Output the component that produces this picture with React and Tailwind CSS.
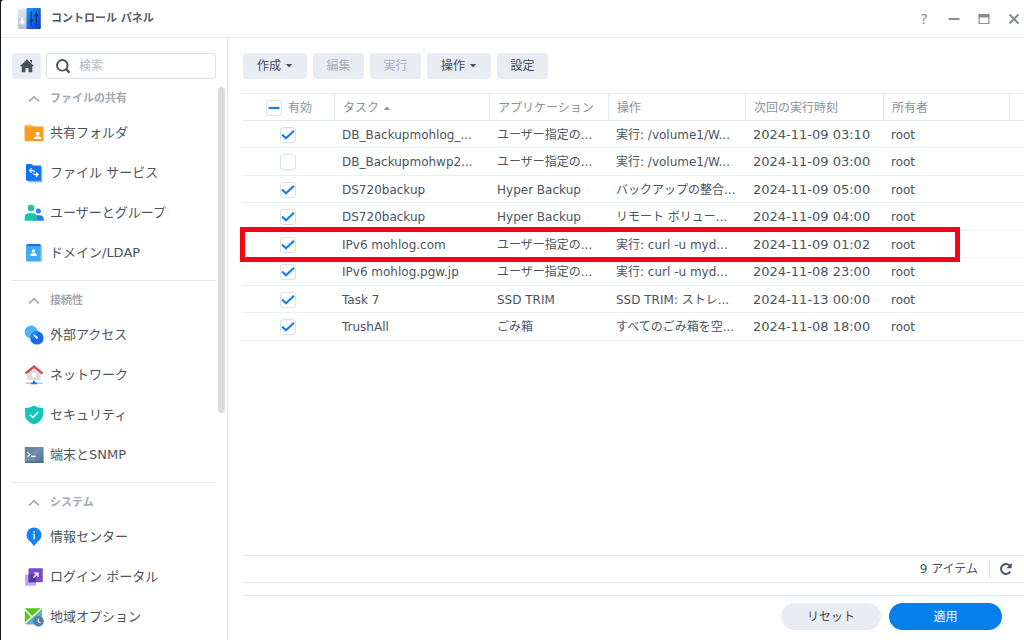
import React, { useState } from "react";

const SharedFolderIcon = () => (
  <svg viewBox="0 0 20 20" className="size-5">
    <path d="M.6 2.500Q.6 1.500 1.600 1.500H7l1.500 1.600H11V6H.6z" fill="#ffc97a" />
    <path d="M.6 3.600h18q.8 0 .8.8v13q0 .8-.8.8H1.400q-.8 0-.8-.8z" fill="#fb9d1e" />
    <circle cx="13.700" cy="10.800" r="2" fill="#fff" />
    <path d="M10 16q0-2.800 3.700-2.800T17.400 16z" fill="#fff" />
  </svg>
);

const FileServiceIcon = () => (
  <svg viewBox="0 0 20 20" className="size-5">
    <path d="M4 3.500h14.200v15.800H4z" fill="#7fb8ff" />
    <path d="M2 2q0-1 1-1h4.500L9 2.500h8V17.800H3q-1 0-1-1z" fill="#0f73f5" />
    <path
      d="M7.700 5.400 5.500 7.600l2.200 2.200M5.500 7.600h3.300q1.500 0 1.700 1.600M12 9.400l2.200 2.200-2.200 2.200M14.200 11.600h-3.300q-1.500 0-1.700-1.500"
      fill="none"
      stroke="#fff"
      strokeWidth="1.200"
    />
  </svg>
);

const UsersIcon = () => (
  <svg viewBox="0 0 20 20" className="size-5">
    <circle cx="14.400" cy="8" r="2.500" fill="#2f7de8" />
    <path d="M9 17.800v-2q0-3.500 3.500-3.500h3q4.300 0 4.300 4v1.500z" fill="#2f7de8" />
    <circle cx="7" cy="5" r="3.300" fill="#17c3b2" />
    <path d="M.7 17.800v-3q0-4.600 4.300-4.600h3.500q4.500 0 4.500 4.600v3z" fill="#17c3b2" />
  </svg>
);

const DomainIcon = () => (
  <svg viewBox="0 0 20 20" className="size-5">
    <path d="M2 3q0-2 2-2h11.500q1.500 0 1.500 1.500V5H2z" fill="#1f6fe0" />
    <path d="M2 3h15.200v15.500H3.500Q2 18.500 2 17z" fill="#3eaaf8" />
    <path d="M16.500 2.500H18v16h-1.500z" fill="#8bcbfb" />
    <circle cx="9.500" cy="8" r="1.700" fill="#fff" />
    <path d="M6.200 13q0-2.900 3.300-2.900t3.300 2.900z" fill="#fff" />
  </svg>
);

const ExternalIcon = () => (
  <svg viewBox="0 0 20 20" className="size-5">
    <circle cx="7.200" cy="7" r="6.500" fill="#4bb2fb" />
    <circle cx="12.900" cy="12.900" r="6.700" fill="#156be8" />
    <path d="M6.300 11.600a6.700 6.700 0 0 1 7.300-5.300 6.500 6.500 0 0 1-5.500 7.200z" fill="#2286f3" />
    <path d="m8.800 9.100 4.800 2.300q1 1.200.2 2t-2-.2z" fill="#fff" />
  </svg>
);

const NetworkIcon = () => (
  <svg viewBox="0 0 20 20" className="size-5">
    <path d="M3.300 8 10 2.500 16.700 8v7H3.300z" fill="#d9dde2" />
    <path d="m1.500 8.500 8.500-7 8.500 7" fill="none" stroke="#d05257" strokeWidth="2.300" />
    <path d="M8 7.800h4.200v4.400H8z" fill="#fff" />
    <path d="M1.300 18.300h17.400" stroke="#b5c4d4" strokeWidth="1.400" />
    <path d="M9 15.800h2v1.600h2v1.800H7v-1.800h2z" fill="#0f7be8" />
  </svg>
);

const SecurityIcon = () => (
  <svg viewBox="0 0 20 20" className="size-5">
    <path d="M10 .4q4 2.600 9 2.700v6.600q0 6.300-9 9.800-9-3.500-9-9.800V3.100Q6 3 10 .4z" fill="#12c7b8" />
    <path d="m6 9.700 2.800 2.800 5.400-5.600" fill="none" stroke="#fff" strokeWidth="1.500" />
  </svg>
);

const TerminalIcon = () => (
  <svg viewBox="0 0 20 20" className="size-5">
    <defs>
      <linearGradient id="term" x1="0" y1="0" x2="1" y2="1">
        <stop offset="0" stopColor="#5d7fa3" />
        <stop offset=".5" stopColor="#7390ae" />
        <stop offset="1" stopColor="#4a6a8e" />
      </linearGradient>
    </defs>
    <rect x=".8" y="2" width="18.800" height="15.800" rx=".8" fill="url(#term)" />
    <path d="M1 16.600h18.600v1.200H1z" fill="#46668a" />
    <path d="m3.400 7.300 2.400 2.200-2.400 2.200M7 11.400h4.600" fill="none" stroke="#fff" strokeWidth="1.200" />
  </svg>
);

const InfoIcon = () => (
  <svg viewBox="0 0 20 20" className="size-5">
    <path
      d="M10 .5a7.500 7.500 0 0 1 7.500 7.500c0 3.400-2.200 5.600-4.500 7.300L10 19.300l-3-4c-2.300-1.700-4.500-3.900-4.500-7.300A7.500 7.500 0 0 1 10 .5z"
      fill="#1480f5"
    />
    <path d="M9.300 4.200h1.500v1.500H9.300zM8.700 7h2.100v5.300H9.500V8.100h-.8z" fill="#fff" />
  </svg>
);

const LoginPortalIcon = () => (
  <svg viewBox="0 0 20 20" className="size-5">
    <rect x="1" y="7.500" width="11" height="11.200" rx="1" fill="#c3a9f2" />
    <rect x="4.500" y="1.300" width="14.300" height="14" rx="1" fill="#7a4cc8" />
    <path d="M4.500 7.500H12v7.800H4.500z" fill="#5f35b0" />
    <path d="m9.500 10.500 4.200-4.200M10 6.100h3.900V10" fill="none" stroke="#fff" strokeWidth="1.300" />
  </svg>
);

const RegionIcon = () => (
  <svg viewBox="0 0 20 20" className="size-5">
    <rect x=".8" y="1.200" width="17.200" height="16" rx="1" fill="#62c221" />
    <path d="M2 17.200 18 3v14.200z" fill="#4db5f5" />
    <path d="M.8 16.500 17.500 1.500M.8 2.500l7 7.200" stroke="#fff" strokeWidth="1.500" />
    <circle cx="14.500" cy="14.300" r="5.300" fill="#557ba8" />
    <path d="M14.300 11.400v3.200l2.200 1.500" fill="none" stroke="#fff" strokeWidth="1.200" />
  </svg>
);

const groups = [
  {
    title: "ファイルの共有",
    items: [
      ["共有フォルダ", SharedFolderIcon],
      ["ファイル サービス", FileServiceIcon],
      ["ユーザーとグループ", UsersIcon],
      ["ドメイン/LDAP", DomainIcon],
    ],
  },
  {
    title: "接続性",
    items: [
      ["外部アクセス", ExternalIcon],
      ["ネットワーク", NetworkIcon],
      ["セキュリティ", SecurityIcon],
      ["端末とSNMP", TerminalIcon],
    ],
  },
  {
    title: "システム",
    items: [
      ["情報センター", InfoIcon],
      ["ログイン ポータル", LoginPortalIcon],
      ["地域オプション", RegionIcon],
    ],
  },
];

const initialTasks = [
  { on: true, name: "DB_Backupmohlog_...", app: "ユーザー指定の...", action: "実行: /volume1/W...", next: "2024-11-09 03:10" },
  { on: false, name: "DB_Backupmohwp2...", app: "ユーザー指定の...", action: "実行: /volume1/W...", next: "2024-11-09 03:00" },
  { on: true, name: "DS720backup", app: "Hyper Backup", action: "バックアップの整合...", next: "2024-11-09 05:00" },
  { on: true, name: "DS720backup", app: "Hyper Backup", action: "リモート ボリュー...", next: "2024-11-09 04:00" },
  { on: true, name: "IPv6 mohlog.com", app: "ユーザー指定の...", action: "実行: curl -u myd...", next: "2024-11-09 01:02", marked: true },
  { on: true, name: "IPv6 mohlog.pgw.jp", app: "ユーザー指定の...", action: "実行: curl -u myd...", next: "2024-11-08 23:00" },
  { on: true, name: "Task 7", app: "SSD TRIM", action: "SSD TRIM: ストレ...", next: "2024-11-13 00:00" },
  { on: true, name: "TrushAll", app: "ごみ箱", action: "すべてのごみ箱を空...", next: "2024-11-08 18:00" },
];

function Checkbox({ label, mixed, checked, onChange }) {
  return (
    <span className="inline-grid size-4 shrink-0 align-middle">
      <input
        type="checkbox"
        aria-label={label}
        checked={checked}
        onChange={onChange}
        className="col-start-1 row-start-1 size-4 appearance-none rounded-[3px] border border-[#d9e2e9] bg-white"
      />
      {(checked || mixed) && (
        <svg viewBox="0 0 16 16" className="pointer-events-none col-start-1 row-start-1 size-4">
          <path
            d={mixed ? "M2.500 8h11" : "m2 7.500 4 3.800 8-7.600"}
            fill="none"
            stroke="#1480e8"
            strokeWidth="2.200"
          />
        </svg>
      )}
    </span>
  );
}

function ToolButton({ children, menu, disabled }) {
  return (
    <button
      disabled={disabled}
      className={`flex h-[26px] items-center justify-center gap-1 rounded-[3px] bg-[#e9edf3] text-[#3f4a55] disabled:text-[#a9b1b9] ${
        menu ? "w-16" : "w-[51px]"
      }`}
    >
      {children}
      {menu && (
        <svg viewBox="0 0 8 4" className="h-1 w-2">
          <path d="M.8 0h6.400L4 3.500z" fill="#4a545e" />
        </svg>
      )}
    </button>
  );
}

const th = "border-l border-[#e1eaee] pl-2 text-left font-normal";

export default function App() {
  const [tasks, setTasks] = useState(initialTasks);
  const toggle = (i) => setTasks(tasks.map((t, j) => (j === i ? { ...t, on: !t.on } : t)));

  return (
    <div className="h-screen overflow-hidden bg-[#10151c] pl-px font-['DejaVu_Sans','Noto_Sans_CJK_JP',sans-serif] text-xs leading-4 text-[#4a545e]">
      <div className="flex h-full flex-col rounded-tl-[3px] bg-white">
        <header className="flex h-[38px] shrink-0 items-center border-b border-[#e3e9ee] pl-4">
          <svg viewBox="0 0 24 24" className="size-6">
            <defs>
              <linearGradient id="panel" x1="0" y1="0" x2="1" y2="1">
                <stop offset="0" stopColor="#1b9bf8" />
                <stop offset="1" stopColor="#1238c4" />
              </linearGradient>
              <linearGradient id="switch" x1="0" y1="0" x2="0" y2="1">
                <stop offset="0" stopColor="#e4e8f6" />
                <stop offset="1" stopColor="#b5bfdf" />
              </linearGradient>
            </defs>
            <rect x="1" y="1.500" width="12" height="20.500" rx="1.500" fill="url(#switch)" />
            <rect x="9.500" y="1" width="14.300" height="21" rx="1" fill="url(#panel)" />
            <circle cx="5.300" cy="15" r="2.600" fill="#fff" stroke="#c6cde0" strokeWidth=".8" />
            <path d="M5.300 10v4" stroke="#fff" strokeWidth="1.400" />
            <path d="M14.300 4.500v14M19.300 4.500v14" stroke="#0b3087" strokeWidth="1.200" />
            <path d="M12.600 13.500H16M17.600 8.500H21" stroke="#0b3087" strokeWidth="1.800" />
          </svg>
          <h1 className="ml-2.5 text-[11px] font-bold text-[#505a65]">コントロール パネル</h1>
          <div className="ml-auto flex items-center gap-2.5 text-[#878e95]">
            <button aria-label="ヘルプ" className="grid size-5 place-items-center text-sm">?</button>
            <button aria-label="最小化" className="grid size-5 place-items-center">
              <svg viewBox="0 0 12 12" className="size-3"><path d="M.5 6h11" stroke="currentColor" strokeWidth="2" /></svg>
            </button>
            <button aria-label="最大化" className="grid size-5 place-items-center">
              <svg viewBox="0 0 12 12" className="size-3">
                <path d="M1.200 1.500h9.600v9H1.200z" fill="none" stroke="currentColor" strokeWidth="1.200" />
                <path d="M.6 1h10.800v3.500H.6z" fill="currentColor" />
              </svg>
            </button>
            <button aria-label="閉じる" className="grid size-5 place-items-center">
              <svg viewBox="0 0 12 12" className="size-3"><path d="m1.500 1.500 9 9m0-9-9 9" stroke="currentColor" strokeWidth="2.200" /></svg>
            </button>
          </div>
        </header>

        <div className="flex min-h-0 flex-1">
          <aside className="relative flex w-[227px] shrink-0 flex-col border-r border-[#e3e9ee] pr-[11px] pl-[11px]">
            <div className="flex gap-[5px] pt-[15px] pb-1.5">
              <button aria-label="ホーム" className="grid h-[26px] w-[29px] place-items-center rounded-[3px] bg-[#e9edf3]">
                <svg viewBox="0 0 16 16" className="size-4">
                  <path d="M8 1.300 15.200 8.200H13.300v6H9.500V10h-3v4.200H2.700v-6H.8zM11 2h2v3l-2-1.900z" fill="#47515c" />
                </svg>
              </button>
              <label className="flex h-[26px] min-w-0 flex-1 items-center gap-2 rounded-[3px] border border-[#d9e2e9] px-2">
                <svg viewBox="0 0 16 16" className="size-4 shrink-0">
                  <circle cx="7.300" cy="7.300" r="5.300" fill="none" stroke="#47515c" strokeWidth="1.900" />
                  <path d="m11 11 3.500 3.700" stroke="#47515c" strokeWidth="2.400" />
                </svg>
                <input
                  type="search"
                  aria-label="検索"
                  placeholder="検索"
                  className="w-full min-w-0 bg-transparent outline-none placeholder:text-[#b0b7be]"
                />
              </label>
            </div>
            <nav className="min-h-0 flex-1 overflow-hidden">
              {groups.map((g, gi) => (
                <section key={g.title} className={gi ? "border-t border-[#e3e9ee] pt-1.5 pb-[7px]" : "pb-[7px]"}>
                  <h2 className="flex h-7 items-center pl-4 text-[11px] font-bold text-[#a3aab1]">
                    <button className="flex items-center gap-2.5">
                      <svg viewBox="0 0 12 8" className="h-2 w-3">
                        <path d="M1 6.500 6 1.700l5 4.800" fill="none" stroke="#98a0a8" strokeWidth="1.500" />
                      </svg>
                      {g.title}
                    </button>
                  </h2>
                  <ul>
                    {g.items.map(([name, Icon]) => (
                      <li key={name}>
                        <a href="#" className="flex h-10 items-center gap-1.5 pl-3 text-[13px]">
                          <Icon />
                          {name}
                        </a>
                      </li>
                    ))}
                  </ul>
                </section>
              ))}
            </nav>
            <div className="absolute top-[49px] right-[2px] h-[326px] w-[7px] rounded-full bg-[#dcdcdc]" />
          </aside>

          <main className="flex min-w-0 flex-1 flex-col pl-[14px]">
            <div className="flex gap-1.5 pt-[15px] pb-3.5 pl-px">
              <ToolButton menu>作成</ToolButton>
              <ToolButton disabled>編集</ToolButton>
              <ToolButton disabled>実行</ToolButton>
              <ToolButton menu>操作</ToolButton>
              <ToolButton>設定</ToolButton>
            </div>

            <div className="min-h-0 flex-1">
              <table className="w-full table-fixed border-separate border-spacing-0">
                <colgroup>
                  <col className="w-[92px]" />
                  <col className="w-[155px]" />
                  <col className="w-[119px]" />
                  <col className="w-[137px]" />
                  <col className="w-[138px]" />
                  <col className="w-[126px]" />
                  <col />
                </colgroup>
                <thead>
                  <tr className="h-7 text-[#8a929a] *:border-t *:border-b *:border-[#e1eaee] *:pt-px">
                    <th className="pl-6 text-left font-normal">
                      <span className="flex items-center gap-1.5">
                        <Checkbox label="すべて有効" mixed checked={false} onChange={() => {}} />
                        有効
                      </span>
                    </th>
                    <th className={th}>
                      <button className="flex items-center gap-1">
                        タスク
                        <svg viewBox="0 0 8 4" className="h-1 w-2"><path d="M.8 4h6.400L4 .5z" fill="#8a929a" /></svg>
                      </button>
                    </th>
                    <th className={th}>アプリケーション</th>
                    <th className={th}>操作</th>
                    <th className={th}>次回の実行時刻</th>
                    <th className={th}>所有者</th>
                    <th className={th} />
                  </tr>
                </thead>
                <tbody>
                  {tasks.map((t, i) => (
                    <tr
                      key={i}
                      className="relative whitespace-nowrap *:border-b *:border-[#e6eff2] *:pt-px *:pl-2 odd:h-[27px] even:h-7"
                    >
                      <td className="pr-2 text-center">
                        <Checkbox label={t.name} checked={t.on} onChange={() => toggle(i)} />
                        {t.marked && (
                          <span className="pointer-events-none absolute -top-1 right-16 -bottom-1 -left-0.5 border-[5px] border-[#f50510]" />
                        )}
                      </td>
                      <td>{t.name}</td>
                      <td>{t.app}</td>
                      <td>{t.action}</td>
                      <td className="text-[13px]">{t.next}</td>
                      <td>root</td>
                      <td />
                    </tr>
                  ))}
                </tbody>
              </table>
            </div>

            <div className="flex h-7 items-center justify-end gap-[11px] border-y border-[#e1eaee] pr-2.5">
              <span>9 アイテム</span>
              <span className="flex h-[18px] items-center border-l border-[#d7e0e6] pl-2">
                <button aria-label="更新">
                  <svg viewBox="0 0 16 16" className="size-4">
                    <path d="M12.300 10.600A5 5 0 1 1 11.600 4.400" fill="none" stroke="#4a545e" strokeWidth="2" />
                    <path d="M13.700 1.800v5.500H8.300z" fill="#4a545e" />
                  </svg>
                </button>
              </span>
            </div>
            <footer className="mt-3 flex justify-end gap-2 border-t border-[#e1eaee] pt-[7px] pr-[22px] pb-2.5">
              <button className="h-[27px] w-[100px] rounded-full bg-[#e9edf3] text-[#3f4a55]">リセット</button>
              <button className="h-[27px] w-[113px] rounded-full bg-[#057feb] text-white">適用</button>
            </footer>
          </main>
        </div>
      </div>
    </div>
  );
}
